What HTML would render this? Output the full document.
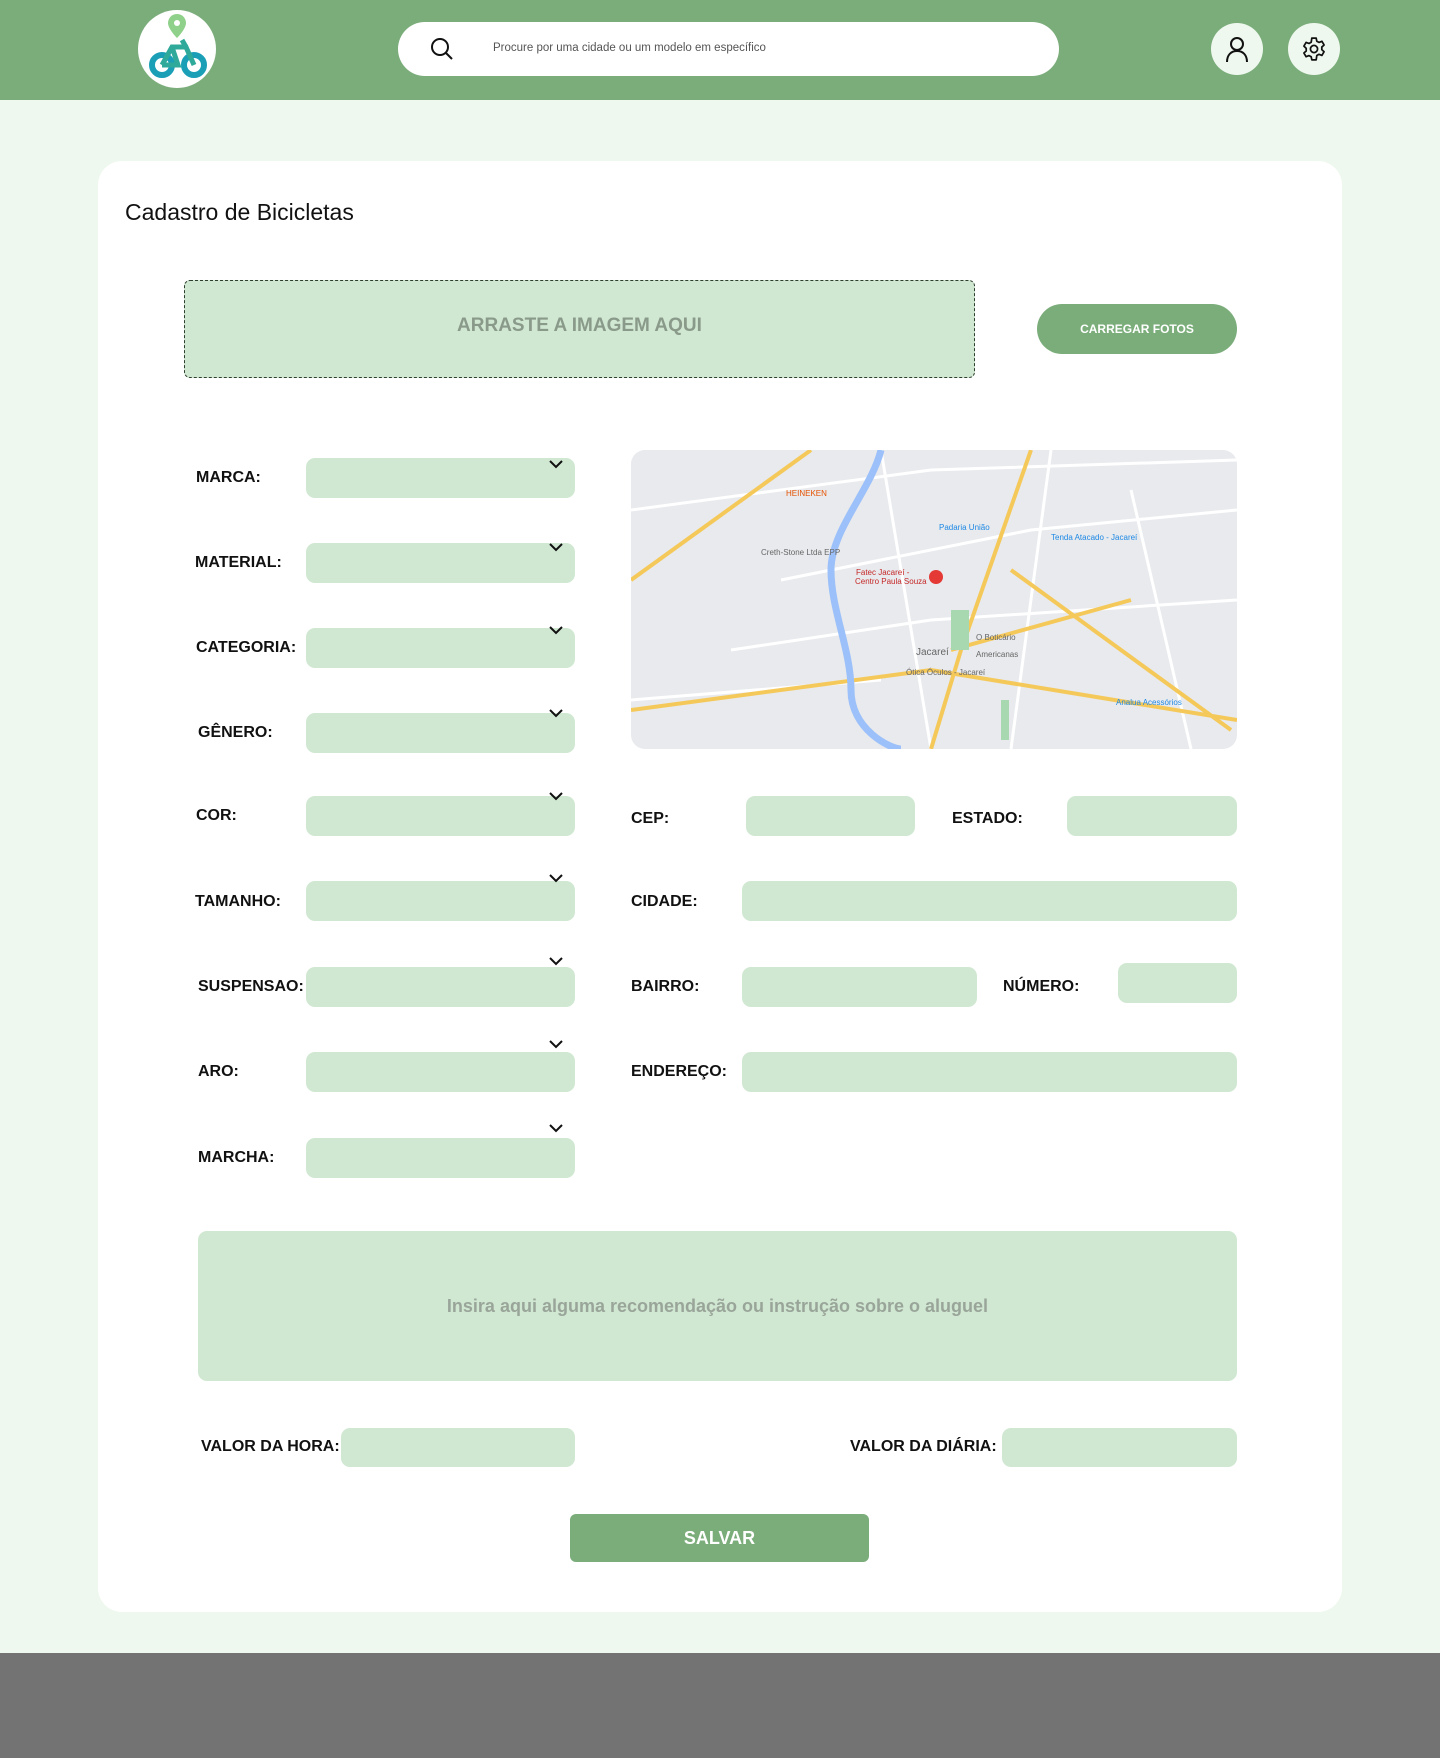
<!DOCTYPE html>
<html><head><meta charset="utf-8"><style>
*{margin:0;padding:0;box-sizing:border-box}
body{width:1440px;height:1758px;background:#eef8ee;font-family:"Liberation Sans",sans-serif;position:relative;overflow:hidden}
.abs{position:absolute}
.hdr{left:0;top:0;width:1440px;height:100px;background:#7bad7b}
.search{left:398px;top:22px;width:661px;height:54px;background:#fff;border-radius:27px}
.search span{position:absolute;left:95px;top:20px;font-size:11.5px;color:#555}
.circ{border-radius:50%;background:#eef8ee}
.card{left:98px;top:161px;width:1244px;height:1451px;background:#fff;border-radius:24px}
.in{background:#d0e8d2;border-radius:9px;position:absolute}
.lb{position:absolute;font-weight:bold;font-size:16px;color:#111;transform:translateY(-50%)}
.foot{left:0;top:1653px;width:1440px;height:105px;background:#737373}
</style></head><body>
<div class="abs hdr"></div>
<div class="abs circ" style="left:138px;top:10px;width:78px;height:78px;background:#fff"></div>
<svg class="abs" style="left:138px;top:10px" width="78" height="78" viewBox="0 0 78 78">
<path d="M39 4c-6 0-9 5-9 9 0 6 9 15 9 15s9-9 9-15c0-4-3-9-9-9z" fill="#8fd08a"/><circle cx="39" cy="13" r="3" fill="#fff"/>
<circle cx="24" cy="55" r="10" fill="none" stroke="#1a9fb7" stroke-width="6"/>
<circle cx="56" cy="55" r="10" fill="none" stroke="#1a9fb7" stroke-width="6"/>
<path d="M24 55l10-18h14l8 18M34 37l6 18h-16M44 30l4 7" fill="none" stroke="#2fa99a" stroke-width="5"/></svg>
<div class="abs search"><svg style="position:absolute;left:32px;top:15px" width="24" height="24" viewBox="0 0 24 24"><circle cx="10" cy="10" r="8" fill="none" stroke="#111" stroke-width="2"/><path d="M16 16l6 6" stroke="#111" stroke-width="2"/></svg><span>Procure por uma cidade ou um modelo em específico</span></div>
<div class="abs circ" style="left:1211px;top:23px;width:52px;height:52px"></div>
<svg class="abs" style="left:1224px;top:36px" width="26" height="26" viewBox="0 0 26 26"><circle cx="13" cy="8" r="6" fill="none" stroke="#111" stroke-width="2"/><path d="M3 26c0-7 4-11 10-11s10 4 10 11" fill="none" stroke="#111" stroke-width="2"/></svg>
<div class="abs circ" style="left:1288px;top:23px;width:52px;height:52px"></div>
<svg class="abs" style="left:1301px;top:36px" width="26" height="26" viewBox="0 0 24 24"><path d="M10 2h4l.6 2.8 2 1.1 2.7-1 2 3.4-2.1 1.9v2.4l2.1 1.9-2 3.4-2.7-1-2 1.1L14 22h-4l-.6-2.8-2-1.1-2.7 1-2-3.4 2.1-1.9v-2.4L2.7 9.3l2-3.4 2.7 1 2-1.1z" fill="none" stroke="#111" stroke-width="1.6" stroke-linejoin="round"/><circle cx="12" cy="12" r="3.3" fill="none" stroke="#111" stroke-width="1.6"/></svg>
<div class="abs card"></div>
<div class="abs" style="left:125px;top:199px;font-size:23px;color:#111">Cadastro de Bicicletas</div>
<div class="abs" style="left:184px;top:280px;width:791px;height:98px;background:#d0e8d2;border:1.5px dashed #2f3f2f;border-radius:6px;display:flex;align-items:center;justify-content:center;padding-bottom:6px;font-size:19px;font-weight:bold;color:#8a9a8a">ARRASTE A IMAGEM AQUI</div>
<div class="abs" style="left:1037px;top:304px;width:200px;height:50px;background:#7bad7b;border-radius:25px;color:#fff;font-size:12px;font-weight:bold;text-align:center;line-height:50px">CARREGAR FOTOS</div>

<div class="in" style="left:306px;top:458px;width:269px;height:40px"></div>
<div class="in" style="left:306px;top:543px;width:269px;height:40px"></div>
<div class="in" style="left:306px;top:628px;width:269px;height:40px"></div>
<div class="in" style="left:306px;top:713px;width:269px;height:40px"></div>
<div class="in" style="left:306px;top:796px;width:269px;height:40px"></div>
<div class="in" style="left:306px;top:881px;width:269px;height:40px"></div>
<div class="in" style="left:306px;top:967px;width:269px;height:40px"></div>
<div class="in" style="left:306px;top:1052px;width:269px;height:40px"></div>
<div class="in" style="left:306px;top:1138px;width:269px;height:40px"></div>
<svg class="abs" style="left:549px;top:460px" width="14" height="720" viewBox="0 0 14 720" fill="none" stroke="#111" stroke-width="2">
<path d="M1 1l6 6 6-6"/><path d="M1 84l6 6 6-6"/><path d="M1 167l6 6 6-6"/><path d="M1 250l6 6 6-6"/><path d="M1 333l6 6 6-6"/><path d="M1 415l6 6 6-6"/><path d="M1 498l6 6 6-6"/><path d="M1 581l6 6 6-6"/><path d="M1 665l6 6 6-6"/></svg>
<div class="lb" style="left:196px;top:478px">MARCA:</div>
<div class="lb" style="left:195px;top:563px">MATERIAL:</div>
<div class="lb" style="left:196px;top:648px">CATEGORIA:</div>
<div class="lb" style="left:198px;top:733px">GÊNERO:</div>
<div class="lb" style="left:196px;top:816px">COR:</div>
<div class="lb" style="left:195px;top:902px">TAMANHO:</div>
<div class="lb" style="left:198px;top:987px">SUSPENSAO:</div>
<div class="lb" style="left:198px;top:1072px">ARO:</div>
<div class="lb" style="left:198px;top:1158px">MARCHA:</div>

<svg class="abs" style="left:631px;top:450px;border-radius:14px" width="606" height="299" viewBox="0 0 606 299">
<rect width="606" height="299" fill="#e8eaed"/>
<g fill="none" stroke="#fff" stroke-width="3"><path d="M0 60L300 20 606 10M150 130L400 80 606 60M100 200L300 170 606 150M250 0L300 299M420 0L380 299M500 40L560 299M0 250L250 230"/></g>
<path d="M0 130L180 0M0 260L300 220 606 270M400 0L330 200 300 299M380 120L600 280M320 200L500 150" fill="none" stroke="#f5c85a" stroke-width="4"/>
<path d="M250 0C240 40 200 80 200 120S220 200 220 240 260 299 270 299" fill="none" stroke="#9cc0f9" stroke-width="7"/>
<rect x="320" y="160" width="18" height="40" fill="#a8d8b0"/><rect x="370" y="250" width="8" height="40" fill="#a8d8b0"/>
<circle cx="305" cy="127" r="7" fill="#e53935"/>
<g font-family="Liberation Sans" font-size="8" fill="#666"><text x="130" y="105">Creth-Stone Ltda EPP</text><text x="225" y="125" fill="#c62828">Fatec Jacareí -</text><text x="224" y="134" fill="#c62828">Centro Paula Souza</text><text x="285" y="205" font-size="10">Jacareí</text><text x="345" y="190">O Boticário</text><text x="345" y="207">Americanas</text><text x="275" y="225">Ótica Óculos - Jacareí</text><text x="420" y="90" fill="#1e88e5">Tenda Atacado - Jacareí</text><text x="155" y="46" fill="#e65100">HEINEKEN</text><text x="308" y="80" fill="#1e88e5">Padaria União</text><text x="485" y="255" fill="#1e88e5">Analua Acessórios</text></g>
</svg>

<div class="lb" style="left:631px;top:819px">CEP:</div>
<div class="in" style="left:746px;top:796px;width:169px;height:40px"></div>
<div class="lb" style="left:952px;top:819px">ESTADO:</div>
<div class="in" style="left:1067px;top:796px;width:170px;height:40px"></div>
<div class="lb" style="left:631px;top:902px">CIDADE:</div>
<div class="in" style="left:742px;top:881px;width:495px;height:40px"></div>
<div class="lb" style="left:631px;top:987px">BAIRRO:</div>
<div class="in" style="left:742px;top:967px;width:235px;height:40px"></div>
<div class="lb" style="left:1003px;top:987px">NÚMERO:</div>
<div class="in" style="left:1118px;top:963px;width:119px;height:40px"></div>
<div class="lb" style="left:631px;top:1072px">ENDEREÇO:</div>
<div class="in" style="left:742px;top:1052px;width:495px;height:40px"></div>

<div class="in" style="left:198px;top:1231px;width:1039px;height:150px;text-align:center;line-height:150px;font-size:18px;font-weight:bold;color:#9aa59a">Insira aqui alguma recomendação ou instrução sobre o aluguel</div>

<div class="lb" style="left:201px;top:1447px">VALOR DA HORA:</div>
<div class="in" style="left:341px;top:1428px;width:234px;height:39px"></div>
<div class="lb" style="left:850px;top:1447px">VALOR DA DIÁRIA:</div>
<div class="in" style="left:1002px;top:1428px;width:235px;height:39px"></div>

<div class="abs" style="left:570px;top:1514px;width:299px;height:48px;background:#7bad7b;border-radius:6px;color:#fff;font-weight:bold;font-size:18px;text-align:center;line-height:48px">SALVAR</div>
<div class="abs foot"></div>
</body></html>
